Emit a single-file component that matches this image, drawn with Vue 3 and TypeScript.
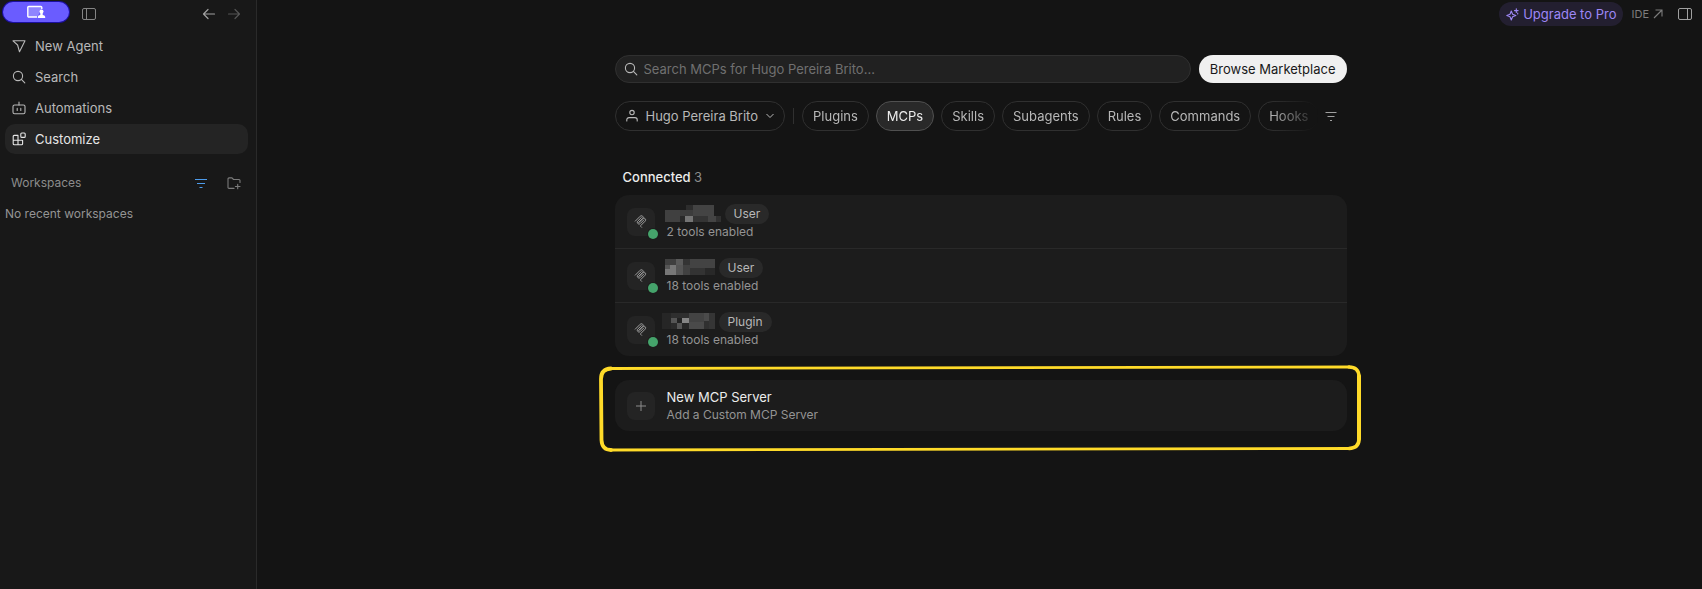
<script setup lang="ts">
import { ref } from 'vue'

type Cell = [x: number, y: number, w: number, h: number, fill: string]
interface Server {
  id: string
  scope: string
  tools: string
  width: number
  lead: boolean
  cells: Cell[]
}

const query = ref('')
const activeTab = ref('MCPs')
const tabs = ['Plugins', 'MCPs', 'Skills', 'Subagents', 'Rules', 'Commands', 'Hooks']

const servers: Server[] = [
  {
    id: 'first', scope: 'User', tools: '2 tools enabled', width: 56, lead: false,
    cells: [
      [21, 0, 7, 5, '#2d2d2d'], [28, 0, 21, 5, '#434343'],
      [0, 5, 15, 12, '#404040'], [15, 5, 13, 6, '#3c3c3c'], [28, 5, 21, 6, '#444444'],
      [15, 11, 5, 6, '#292929'], [20, 11, 8, 6, '#747474'], [28, 11, 15, 6, '#343434'],
      [43, 11, 8, 6, '#444444'], [51, 11, 5, 6, '#303030'],
    ],
  },
  {
    id: 'second', scope: 'User', tools: '18 tools enabled', width: 50, lead: false,
    cells: [
      [0, 0, 11, 6, '#3f3f3f'], [11, 0, 7, 6, '#5a5a5a'], [18, 0, 7, 6, '#343434'], [25, 0, 25, 9, '#434343'],
      [0, 6, 5, 4, '#555555'], [5, 6, 6, 10, '#777777'], [11, 6, 7, 10, '#555555'], [18, 6, 7, 10, '#414141'],
      [0, 10, 5, 6, '#777777'], [25, 9, 15, 7, '#333333'], [40, 9, 10, 7, '#282828'],
    ],
  },
  {
    id: 'third', scope: 'Plugin', tools: '18 tools enabled', width: 53, lead: true,
    cells: [
      [0, 0, 9, 16, '#262626'], [9, 0, 18, 5, '#2e2e2e'], [27, 0, 15, 9, '#434343'], [42, 0, 5, 8, '#4b4b4b'], [47, 0, 6, 16, '#353535'],
      [9, 5, 6, 5, '#555555'], [15, 5, 5, 5, '#222222'], [20, 5, 7, 5, '#858585'],
      [9, 10, 6, 6, '#2b2b2b'], [15, 10, 5, 6, '#555555'], [20, 10, 7, 6, '#272727'],
      [27, 9, 15, 7, '#4a4a4a'], [42, 8, 5, 8, '#303030'],
    ],
  },
]
</script>

<template>
  <div class="app">
    <aside class="sidebar">
      <header class="side-top">
        <button class="share" aria-label="Screen sharing">
          <svg width="20" height="14" viewBox="0 0 20 14">
            <path d="M11 12H2.800a1 1 0 0 1-1-1V2.500a1 1 0 0 1 1-1h12a1 1 0 0 1 1 1V4" fill="#8f85ff" stroke="#fff" stroke-width="1.400" />
            <circle cx="15.500" cy="6.600" r="2" fill="#fff" />
            <path d="M11.800 13v-1c0-1.200 1.400-1.800 2.500-2V8h2.400v2c1.100.200 2.500.800 2.500 2v1z" fill="#fff" />
          </svg>
        </button>
        <button class="icon-btn" aria-label="Toggle sidebar">
          <svg width="16" height="14" viewBox="0 0 16 14" fill="none" stroke="#858585">
            <rect x="1.500" y="1.500" width="13" height="11" rx="1.500" /><path d="M5.500 1.500v11" />
          </svg>
        </button>
        <nav class="history" aria-label="History">
          <button class="icon-btn" aria-label="Back">
            <svg width="14" height="14" viewBox="0 0 14 14" fill="none" stroke="#a0a0a0" stroke-width="1.200" stroke-linecap="round" stroke-linejoin="round">
              <path d="M12.500 7H1.500M6 2.500 1.500 7 6 11.500" />
            </svg>
          </button>
          <button class="icon-btn" aria-label="Forward">
            <svg width="14" height="14" viewBox="0 0 14 14" fill="none" stroke="#555" stroke-width="1.200" stroke-linecap="round" stroke-linejoin="round">
              <path d="M1.500 7h11M8 2.500 12.500 7 8 11.500" />
            </svg>
          </button>
        </nav>
      </header>

      <nav class="menu" aria-label="Main">
        <button class="menu-item">
          <svg class="ico" viewBox="0 0 14 14"><path d="M1 1.800h12L7.500 12.800 5.600 6z" /></svg>
          New Agent
        </button>
        <button class="menu-item">
          <svg class="ico" viewBox="0 0 14 14"><circle cx="6" cy="6" r="4.600" /><path d="m9.400 9.400 3.400 3.400" /></svg>
          Search
        </button>
        <button class="menu-item">
          <svg class="ico" viewBox="0 0 14 14"><rect x="1" y="4" width="12" height="8.800" rx="1.600" /><path d="M7 4V1M5.200 7.400v2M8.800 7.400v2" /></svg>
          Automations
        </button>
        <button class="menu-item active">
          <svg class="ico" viewBox="0 0 14 14"><path d="M6 3.400H2.200A1 1 0 0 0 1.200 4.400v7.400a1 1 0 0 0 1 1H9.600a1 1 0 0 0 1-1V8.200H1.200M6 3.400v9.400" /><rect x="8.800" y="1" width="4.400" height="4.400" rx="1" /></svg>
          Customize
        </button>
      </nav>

      <div class="ws-head">
        <h2>Workspaces</h2>
        <button class="icon-btn" aria-label="Filter workspaces">
          <svg width="14" height="14" viewBox="0 0 14 14" fill="none" stroke="#4d9bea" stroke-width="1"><path d="M1 3.500h12M3 7.500h8M5.500 11.500h3" /></svg>
        </button>
        <button class="icon-btn" aria-label="Add workspace">
          <svg width="14" height="14" viewBox="0 0 14 14" fill="none" stroke="#7b7b7b" stroke-width="1.100" stroke-linecap="round" stroke-linejoin="round">
            <path d="M7 12.400H2a1 1 0 0 1-1-1V2.900a1 1 0 0 1 1-1h3l1.500 1.600H12a1 1 0 0 1 1 1V6.500M10.700 8.200v4.600M8.400 10.500H13" />
          </svg>
        </button>
      </div>
      <p class="ws-empty">No recent workspaces</p>
    </aside>

    <main class="main">
      <header class="topbar">
        <button class="upgrade">
          <svg width="13" height="13" viewBox="0 0 13 13" fill="none" stroke="#9d87f5" stroke-width="1.100" stroke-linejoin="round" stroke-linecap="round">
            <path d="M5.300 3 6.600 6.200 9.800 7.500 6.600 8.800 5.300 12 4 8.800.8 7.500 4 6.200z M10.300.8v3.600M8.500 2.600h3.600M11.700 5v1" />
          </svg>
          Upgrade to Pro
        </button>
        <a class="ide" href="#">
          IDE
          <svg width="10" height="10" viewBox="0 0 10 10" fill="none" stroke="currentColor" stroke-width="1.100"><path d="M1 9 9 1M2.500 1H9v6.500" /></svg>
        </a>
        <button class="icon-btn" aria-label="Toggle panel">
          <svg width="16" height="14" viewBox="0 0 16 14" fill="none" stroke="#a0a0a0">
            <rect x="1.500" y="1.500" width="13" height="11" rx="1.500" /><path d="M10.500 1.500v11" />
          </svg>
        </button>
      </header>

      <div class="content">
        <div class="search-row">
          <label class="search">
            <svg class="ico" viewBox="0 0 14 14"><circle cx="6" cy="6" r="4.600" /><path d="m9.400 9.400 3.400 3.400" /></svg>
            <input v-model="query" type="text" aria-label="Search MCPs" placeholder="Search MCPs for Hugo Pereira Brito..." />
          </label>
          <button class="browse">Browse Marketplace</button>
        </div>

        <div class="filters">
          <button class="pill owner">
            <svg class="ico" viewBox="0 0 14 14"><circle cx="7" cy="3.600" r="2.200" /><path d="M1.800 12v-1.200a2.200 2.200 0 0 1 2.200-2.200h6a2.200 2.200 0 0 1 2.200 2.200V12" /></svg>
            Hugo Pereira Brito
            <svg width="10" height="10" viewBox="0 0 10 10" fill="none" stroke="currentColor"><path d="M1.500 3 5 6.500 8.500 3" /></svg>
          </button>
          <span class="sep"></span>
          <div class="tabs">
            <button v-for="tab in tabs" :key="tab" class="pill" :class="{ on: tab === activeTab }" @click="activeTab = tab">{{ tab }}</button>
          </div>
          <button class="icon-btn filter" aria-label="Filter">
            <svg width="14" height="14" viewBox="0 0 14 14" fill="none" stroke="#a0a0a0"><path d="M1.500 3.500h11M3.500 7.500h7M6 11.500h2" /></svg>
          </button>
        </div>

        <h1 class="heading">Connected <span>3</span></h1>

        <ul class="card">
          <li v-for="s in servers" :key="s.id" class="row">
            <span class="tile">
              <svg width="13" height="13" viewBox="0 0 180 180" fill="none" stroke="#a6a6a6" stroke-width="13" stroke-linecap="round">
                <path d="M18 84.853 85.882 16.971c9.373-9.373 24.569-9.373 33.941 0 9.373 9.372 9.373 24.568 0 33.941L68.558 102.177" />
                <path d="M69.265 101.470 119.823 50.912c9.373-9.373 24.569-9.373 33.942 0l.353.353c9.373 9.373 9.373 24.569 0 33.941L92.725 146.600c-3.124 3.124-3.124 8.189 0 11.313l12.606 12.607" />
                <path d="M102.853 33.941 52.648 84.146c-9.372 9.372-9.372 24.568 0 33.941 9.373 9.372 24.569 9.372 33.941 0l50.205-50.205" />
              </svg>
              <i class="dot"></i>
            </span>
            <div class="info">
              <div class="name" :class="{ lead: s.lead }">
                <svg :width="s.width" height="17" :viewBox="`0 0 ${s.width} 17`" shape-rendering="crispEdges" role="img" aria-label="Hidden name">
                  <rect v-for="(c, i) in s.cells" :key="i" :x="c[0]" :y="c[1]" :width="c[2]" :height="c[3]" :fill="c[4]" />
                </svg>
                <span class="badge">{{ s.scope }}</span>
              </div>
              <p class="sub">{{ s.tools }}</p>
            </div>
          </li>
        </ul>

        <div class="new-wrap">
          <button class="card new">
            <span class="tile">
              <svg width="12" height="12" viewBox="0 0 12 12" fill="none" stroke="#8c8c8c"><path d="M6 1v10M1 6h10" /></svg>
            </span>
            <span class="new-text">
              <span class="title">New MCP Server</span>
              <span class="sub">Add a Custom MCP Server</span>
            </span>
          </button>
          <svg class="marker" viewBox="0 0 763 87" preserveAspectRatio="none" fill="none" stroke="#ffdb29" stroke-linecap="round" aria-hidden="true">
            <path d="M12 3.500Q300 2.600 750 2" stroke-width="2.800" />
            <path d="M750 2q9.500 0 10 9" stroke-width="3.400" />
            <path d="M760 11v63" stroke-width="4" />
            <path d="M760 74q0 9-10 9.500" stroke-width="3.600" />
            <path d="M750 83.500Q400 84 12 85" stroke-width="2.800" />
            <path d="M12 85q-9 0-9.500-10L2 14Q2 4 12 3.500" stroke-width="3.800" />
          </svg>
        </div>
      </div>
    </main>
  </div>
</template>

<style>
html,
body {
  background: #141414;
}
</style>

<style scoped>
.app {
  display: flex;
  min-height: 100vh;
  background: #141414;
  color: #b8b8b8;
  font: 13px/16px Inter, "Liberation Sans", sans-serif;
}
* { box-sizing: border-box; }
button {
  margin: 0;
  padding: 0;
  border: 0;
  background: none;
  color: inherit;
  font: inherit;
  text-align: left;
  cursor: pointer;
}
h1, h2, p, ul { margin: 0; padding: 0; list-style: none; }
svg { display: block; flex: none; }
.icon-btn { display: flex; }
.ico {
  width: 14px;
  height: 14px;
  fill: none;
  stroke: currentColor;
  stroke-width: 1.1;
  stroke-linecap: round;
  stroke-linejoin: round;
}
.sidebar {
  flex: none;
  width: 257px;
  background: #181818;
  border-right: 1px solid #2a2a2a;
}
.side-top {
  display: flex;
  align-items: center;
  height: 28px;
  padding: 0 15px 0 3px;
}
.share {
  display: flex;
  align-items: center;
  justify-content: center;
  width: 66px;
  height: 20px;
  margin: 0 12px 4px 0;
  border-radius: 10px;
  background: #6a5cff;
  box-shadow: 0 0 0 1px #1c0fa0;
}
.history { display: flex; gap: 11px; margin-left: auto; }
.menu {
  display: grid;
  gap: 1px;
  padding: 3px 8px 0 5px;
}
.menu-item {
  display: flex;
  align-items: center;
  gap: 9px;
  height: 30px;
  padding: 0 7px;
  border-radius: 10px;
}
.menu-item.active { background: #242424; color: #e6e6e6; }
.ws-head {
  display: flex;
  align-items: center;
  gap: 19px;
  margin-top: 21px;
  padding: 0 15px 0 11px;
  color: #8c8c8c;
}
.ws-head h2 { flex: 1; font-size: 12px; font-weight: 400; }
.ws-empty { padding: 15px 5px; font-size: 12px; color: #949494; }

.main { flex: 1; min-width: 0; }
.topbar {
  display: flex;
  align-items: center;
  justify-content: flex-end;
  gap: 14px;
  height: 28px;
  padding-right: 9px;
}
.upgrade {
  display: flex;
  align-items: center;
  gap: 4px;
  height: 24px;
  margin-right: -6px;
  padding: 0 7px;
  border-radius: 12px;
  background: #231f30;
  color: #9d87f5;
}
.ide {
  display: flex;
  align-items: center;
  gap: 4px;
  color: #7d7d7d;
  font-size: 11px;
  text-decoration: none;
}
.content {
  max-width: 734px;
  margin: 27px auto 0;
  padding-left: 2px;
}
.search-row { display: flex; gap: 8px; }
.search {
  display: flex;
  flex: 1;
  align-items: center;
  gap: 6px;
  height: 28px;
  padding: 0 8px;
  border: 1px solid #303030;
  border-radius: 14px;
  background: #212121;
}
.search input {
  flex: 1;
  min-width: 0;
  padding: 0;
  border: 0;
  outline: 0;
  background: none;
  color: #e6e6e6;
  font: inherit;
}
.search input::placeholder { color: #707070; opacity: 1; }
.browse {
  height: 28px;
  padding: 0 11px;
  border-radius: 14px;
  background: #f0f0f0;
  color: #181818;
}
.filters {
  display: flex;
  align-items: center;
  margin-top: 18px;
}
.pill {
  flex: none;
  height: 30px;
  padding: 0 10px;
  border: 1px solid #303030;
  border-radius: 15px;
}
.pill.on { border-color: #505050; background: #292929; color: #ececec; }
.owner { display: flex; align-items: center; gap: 7px; padding: 0 9px; }
.sep { width: 1px; height: 16px; margin: 0 8px; background: #303030; }
.tabs {
  display: flex;
  flex: 1;
  gap: 7px;
  min-width: 0;
  overflow: hidden;
  mask-image: linear-gradient(to right, #000 calc(100% - 48px), transparent);
}
.filter { margin: 0 9px 0 6px; }
.heading {
  margin: 38px 8px 10px;
  font-size: 13px;
  font-weight: 500;
  line-height: 16px;
  color: #ececec;
}
.heading span { font-weight: 400; color: #8c8c8c; }
.card { border-radius: 14px; background: #1c1c1c; }
.row {
  display: flex;
  align-items: center;
  gap: 10px;
  box-sizing: content-box;
  height: 53px;
  padding: 0 12px;
}
.row + .row { border-top: 1px solid #292929; }
.tile {
  position: relative;
  display: flex;
  flex: none;
  align-items: center;
  justify-content: center;
  width: 28px;
  height: 28px;
  border-radius: 8px;
  background: #242424;
}
.dot {
  position: absolute;
  right: -3px;
  bottom: -3px;
  width: 10px;
  height: 10px;
  border-radius: 50%;
  background: #45a36b;
  box-shadow: 0 0 0 1px #1c1c1c;
}
.name { display: flex; align-items: center; gap: 4px; height: 20px; }
.name.lead { margin-left: -3px; }
.badge {
  padding: 0 9px;
  border-radius: 10px;
  background: #292929;
  font-size: 12px;
  line-height: 20px;
}
.sub { font-size: 12px; line-height: 16px; color: #949494; }
.info .sub { margin-left: 2px; }
.new-wrap { position: relative; margin-top: 24px; }
.new {
  display: flex;
  align-items: center;
  gap: 12px;
  width: 100%;
  height: 51px;
  padding: 0 12px;
}
.new-text { display: grid; }
.title, .new .sub { line-height: 17px; }
.title { color: #ececec; }
.marker {
  position: absolute;
  top: -15px;
  left: -16px;
  width: calc(100% + 31px);
  height: 87px;
}
</style>
